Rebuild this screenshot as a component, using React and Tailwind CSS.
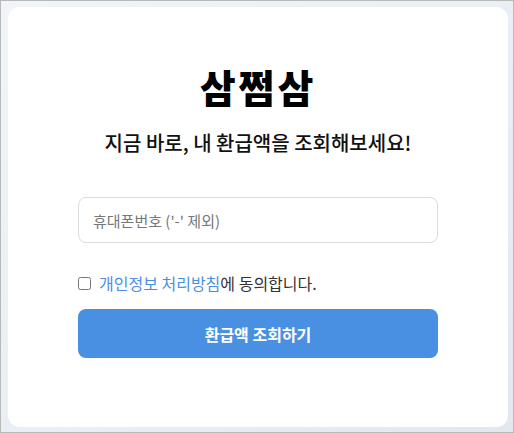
import { useState } from "react";

function App() {
  const [phone, setPhone] = useState("");
  const [agree, setAgree] = useState(false);

  return (
    <div
      className="h-[433px] w-full border border-[#b9b9b9] bg-gradient-to-br from-[#f1f5fa] to-[#e3e8f0] pl-[7px] pt-[6px]"
      style={{ fontFamily: '"Noto Sans CJK KR", "Noto Sans", sans-serif' }}
    >
      <div className="flex h-[420px] w-[500px] flex-col items-center rounded-[12px] bg-white pt-[60px]">
        <h1 className="text-[39px] font-black leading-none tracking-[3px] text-black">삼쩜삼</h1>
        <p className="mt-[27px] text-[20px] font-medium leading-none text-[#111]">
          지금 바로, 내 환급액을 조회해보세요!
        </p>

        <div className="mt-[44px] flex w-[360px] flex-col">
          <input
            type="tel"
            value={phone}
            onChange={(e) => setPhone(e.target.value)}
            placeholder="휴대폰번호 ('-' 제외)"
            className="h-[46px] w-full rounded-[8px] border border-[#dcdcdc] px-[14px] text-[15px] text-[#222] outline-none placeholder:text-[#777]"
          />

          <label className="mt-[32px] flex items-center text-[16px] leading-none text-[#333]">
            <input
              type="checkbox"
              checked={agree}
              onChange={(e) => setAgree(e.target.checked)}
              className="m-0 h-[13px] w-[13px]"
            />
            <span className="ml-[8px]">
              <a href="#" className="text-[#4a90e2]">
                개인정보 처리방침
              </a>
              에 동의합니다.
            </span>
          </label>

          <button
            type="button"
            className="mt-[18px] h-[49px] w-full rounded-[8px] bg-[#4a90e2] text-[16px] font-bold text-white"
          >
            환급액 조회하기
          </button>
        </div>
      </div>
    </div>
  );
}

export default App;
